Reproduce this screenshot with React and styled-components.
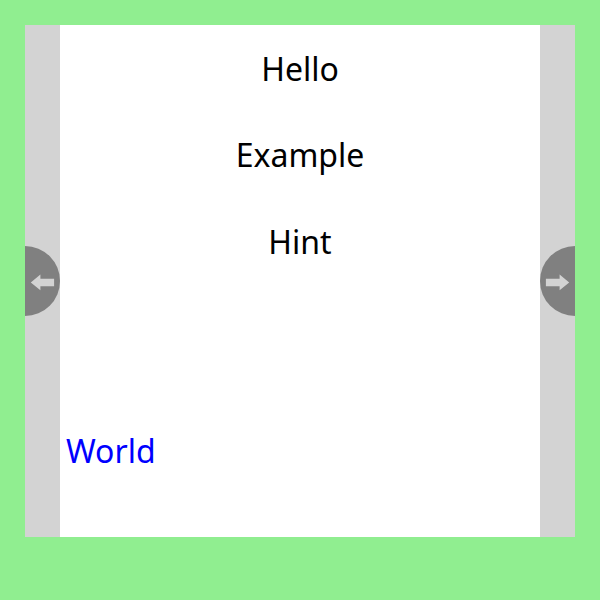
import React from "react";
import styled, { createGlobalStyle } from "styled-components";

const GlobalStyle = createGlobalStyle`
  html, body { margin: 0; background: lightgreen; }
  body { font-family: "Noto Sans", sans-serif; font-size: 32px; color: black; }
`;

const Page = styled.main`
  box-sizing: border-box;
  height: 600px;
  padding: 25px 25px 63px;
  background: lightgreen;
`;

const Viewer = styled.div`
  display: grid;
  grid-template-columns: 35px 1fr 35px;
  height: 100%;
`;

const Rail = styled.aside`
  display: flex;
  align-items: center;
  background: lightgray;
`;

const NavButton = styled.button`
  display: flex;
  align-items: center;
  justify-content: center;
  width: 35px;
  height: 70px;
  padding: 0;
  border: 0;
  border-radius: ${({ $side }) => ($side === "left" ? "0 35px 35px 0" : "35px 0 0 35px")};
  background: gray;
  color: lightgray;
`;

const ArrowIcon = styled.svg`
  display: block;
  width: 35px;
  height: 24px;
  margin-top: 2px;
  transform: ${({ $side }) => ($side === "left" ? "none" : "scaleX(-1)")};
`;

const Content = styled.section`
  display: flex;
  flex-direction: column;
  background: white;
`;

const Word = styled.p`
  margin: 0 0 42.5px;
  line-height: 44px;
  text-align: center;
`;

const Words = styled.div`
  box-sizing: border-box;
  height: 404px;
  padding-top: 21.8px;
  display: flex;
  flex-direction: column;
`;

const Answer = styled.p`
  margin: 0 0 0 6px;
  line-height: 44px;
  color: blue;
`;

function Nav({ side, label }) {
  return (
    <NavButton $side={side} aria-label={label}>
      <ArrowIcon $side={side} viewBox="0 0 35 24" fill="currentColor">
        <path d="M5.8 12.4 15.4 4.6V8.7H29.1V16.2H15.4V20.2Z" />
      </ArrowIcon>
    </NavButton>
  );
}

export default function App() {
  return (
    <Page>
      <GlobalStyle />
      <Viewer>
        <Rail><Nav side="left" label="Previous" /></Rail>
        <Content>
          <Words>
            {["Hello", "Example", "Hint"].map((word) => <Word key={word}>{word}</Word>)}
          </Words>
          <Answer>World</Answer>
        </Content>
        <Rail><Nav side="right" label="Next" /></Rail>
      </Viewer>
    </Page>
  );
}
